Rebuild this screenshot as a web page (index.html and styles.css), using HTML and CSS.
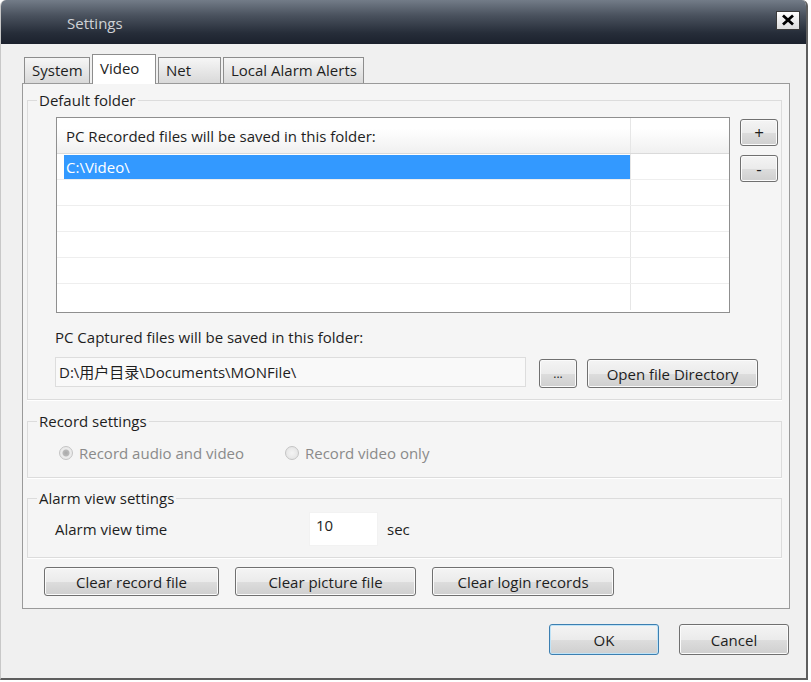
FILE: index.html
```html
<!DOCTYPE html>
<html lang="en">

<head>
    <meta charset="UTF-8">
    <meta name="viewport" content="width=device-width, initial-scale=1.0">
    <title>Settings</title>
    <link rel="stylesheet" href="styles.css">
</head>

<body>
    <div class="window">
        <div class="titlebar">
            <span class="title">Settings</span>
            <span class="close_btn">
                <svg width="14" height="12" viewBox="0 0 14 12">
                    <path d="M2 1.5 L12 10.5 M12 1.5 L2 10.5" stroke="#000" stroke-width="2.8" />
                </svg>
            </span>
        </div>

        <div class="dialog_body">
            <div class="tabs">
                <div class="tab tab_system">System</div>
                <div class="tab active">Video</div>
                <div class="tab tab_net">Net</div>
                <div class="tab tab_alarm">Local Alarm Alerts</div>
            </div>

            <div class="tab_pane">
                <fieldset class="group group_folder">
                    <legend>Default folder</legend>

                    <div class="list_row">
                        <div class="list_box">
                            <div class="list_head">
                                <div class="c1">PC Recorded files will be saved in this folder:</div>
                                <div class="c2"></div>
                            </div>
                            <div class="list_item selected">
                                <div class="c1">C:\Video\</div>
                                <div class="c2"></div>
                            </div>
                            <div class="list_item"><div class="c1"></div><div class="c2"></div></div>
                            <div class="list_item"><div class="c1"></div><div class="c2"></div></div>
                            <div class="list_item"><div class="c1"></div><div class="c2"></div></div>
                            <div class="list_item"><div class="c1"></div><div class="c2"></div></div>
                            <div class="list_item last"><div class="c1"></div><div class="c2"></div></div>
                        </div>
                        <div class="side_buttons">
                            <button class="btn sq">+</button>
                            <button class="btn sq">-</button>
                        </div>
                    </div>

                    <div class="capture_label">PC Captured files will be saved in this folder:</div>
                    <div class="capture_row">
                        <div class="path_field">D:\用户目录\Documents\MONFile\</div>
                        <button class="btn browse_btn">...</button>
                        <button class="btn open_btn">Open file Directory</button>
                    </div>
                </fieldset>

                <fieldset class="group group_record">
                    <legend>Record settings</legend>
                    <div class="radio_row">
                        <label class="radio_opt first"><input type="radio" name="rec" checked disabled> Record audio and video</label>
                        <label class="radio_opt"><input type="radio" name="rec" disabled> Record video only</label>
                    </div>
                </fieldset>

                <fieldset class="group group_alarm">
                    <legend>Alarm view settings</legend>
                    <div class="alarm_row">
                        <span class="alarm_label">Alarm view time</span>
                        <div class="time_field">10</div>
                        <span class="unit">sec</span>
                    </div>
                </fieldset>

                <div class="clear_row">
                    <button class="btn clear_record">Clear record file</button>
                    <button class="btn clear_picture">Clear picture file</button>
                    <button class="btn clear_login">Clear login records</button>
                </div>
            </div>

            <div class="dialog_buttons">
                <button class="btn ok_btn">OK</button>
                <button class="btn cancel_btn">Cancel</button>
            </div>
        </div>
    </div>
</body>

</html>
```

FILE: styles.css
```css
* {
    margin: 0;
    padding: 0;
    box-sizing: border-box;
}

body {
    background: #ffffff;
    font-family: "Open Sans", "Noto Sans CJK SC", sans-serif;
    font-size: 15px;
    color: #1e1e1e;
}

.window {
    width: 808px;
    height: 680px;
    background: #f0f0f0;
    border-right: 2px solid #5e5e5e;
    border-bottom: 2px solid #5e5e5e;
    border-left: 1px solid #c8c8c8;
    border-radius: 6px 6px 0 0;
    overflow: hidden;
}

/* title bar */
.titlebar {
    height: 44px;
    background: linear-gradient(#737c88 0%, #4a525e 35%, #262d39 75%, #1b212d 100%);
    display: flex;
    align-items: center;
    justify-content: space-between;
    padding: 0 6px 0 66px;
}

.title {
    color: #cfd2d6;
    font-size: 15px;
    margin-top: 2px;
}

.close_btn {
    width: 24px;
    height: 19px;
    margin-bottom: 4px;
    background: linear-gradient(#ffffff, #dcdcdc);
    border: 1px solid #3a3a3a;
    display: flex;
    align-items: center;
    justify-content: center;
}

/* dialog body */
.dialog_body {
    padding: 10px 16px 0 21px;
}

.tabs {
    display: flex;
    align-items: flex-end;
    gap: 2px;
    padding-left: 2px;
    height: 29px;
    position: relative;
    z-index: 1;
}

.tab {
    height: 26px;
    padding-left: 7px;
    border: 1px solid #8d8d8d;
    border-bottom: none;
    background: linear-gradient(#f6f6f6, #d9d9d9);
    display: flex;
    align-items: center;
    line-height: 1;
    white-space: nowrap;
}

.tab_system {
    width: 66px;
}

.tab.active {
    width: 64px;
    height: 30px;
    background: #ffffff;
    align-items: flex-start;
    padding-top: 6px;
    margin-bottom: -1px;
}

.tab_net {
    width: 63px;
}

.tab_alarm {
    width: 141px;
}

.tab_pane {
    border: 1px solid #9a9a9a;
    background: #f5f5f5;
    padding: 7px 7px 12px 4px;
}

/* group boxes */
.group {
    border: 1px solid #dcdcdc;
    box-shadow: 0 1px 0 #ffffff;
}

.group legend {
    margin-left: 9px;
    padding: 0 2px;
    line-height: 18px;
}

.list_row {
    display: flex;
    margin: 8px 0 0 28px;
    gap: 10px;
}

.list_box {
    width: 674px;
    height: 196px;
    border: 1px solid #8f8f8f;
    background: #ffffff;
}

.list_head {
    display: flex;
    height: 36px;
    background: linear-gradient(#ffffff 30%, #f0f0f0);
    border-bottom: 1px solid #dadada;
}

.list_head .c1 {
    line-height: 36px;
}

.c1 {
    width: 566px;
    margin-left: 7px;
    padding-left: 2px;
    white-space: nowrap;
}

.c2 {
    flex: 1;
    border-left: 1px solid #e6e6e6;
}

.list_item {
    display: flex;
    height: 26px;
    border-bottom: 1px solid #eeeeee;
}

.list_item.last {
    border-bottom: none;
}

.list_item.selected .c1 {
    background: #3399ff;
    color: #ffffff;
    line-height: 24px;
    margin-top: 1px;
    height: 24px;
}

.side_buttons {
    display: flex;
    flex-direction: column;
    gap: 9px;
    margin-top: 2px;
}

.btn {
    font-family: "Open Sans", "Noto Sans CJK SC", sans-serif;
    font-size: 15px;
    color: #1e1e1e;
    border: 1px solid #707070;
    border-radius: 3px;
    background: linear-gradient(#f4f4f4 0%, #ebebeb 50%, #dddddd 51%, #cfcfcf 100%);
    box-shadow: inset 0 0 0 1px #fbfbfb;
    white-space: nowrap;
}

.btn.sq {
    width: 38px;
    height: 27px;
    font-size: 17px;
    line-height: 1;
}

.capture_label {
    margin: 15px 0 0 27px;
    line-height: 18px;
}

.capture_row {
    display: flex;
    align-items: flex-start;
    margin: 11px 0 11px 27px;
}

.path_field {
    width: 471px;
    height: 30px;
    line-height: 28px;
    padding-left: 3px;
    border: 1px solid #dddddd;
    background: #f9f9f9;
    white-space: nowrap;
}

.browse_btn {
    width: 38px;
    height: 29px;
    margin-left: 13px;
    margin-top: 2px;
    font-size: 12px;
}

.open_btn {
    width: 171px;
    height: 29px;
    margin-left: 10px;
    margin-top: 2px;
}

.group_record {
    margin-top: 12px;
}

.radio_row {
    display: flex;
    margin: 13px 0 14px 31px;
    height: 20px;
    align-items: center;
    color: #8a8a8a;
}

.radio_opt {
    display: flex;
    align-items: center;
    gap: 6px;
    white-space: nowrap;
}

.radio_opt.first {
    width: 226px;
}

.radio_opt input {
    appearance: none;
    width: 14px;
    height: 14px;
    border-radius: 50%;
    border: 1px solid #c4c4c4;
    background: radial-gradient(circle, #f4f4f4, #e0e0e0);
}

.radio_opt input:checked {
    background: radial-gradient(circle, #a9a9a9 0, #b9b9b9 3px, #ececec 4px, #e4e4e4 100%);
}

.group_alarm {
    margin-top: 11px;
}

.alarm_row {
    display: flex;
    align-items: center;
    margin: 5px 0 11px 27px;
}

.alarm_label {
    width: 254px;
}

.time_field {
    width: 69px;
    height: 34px;
    background: #ffffff;
    padding: 3px 0 0 6px;
    line-height: 18px;
    border: 1px solid #f2f2f2;
}

.unit {
    margin-left: 9px;
}

.clear_row {
    display: flex;
    margin: 9px 0 0 17px;
    gap: 16px;
}

.clear_row .btn {
    height: 29px;
}

.clear_record {
    width: 175px;
}

.clear_picture {
    width: 181px;
}

.clear_login {
    width: 182px;
}

.dialog_buttons {
    display: flex;
    justify-content: flex-end;
    gap: 20px;
    margin-top: 15px;
    padding-right: 1px;
}

.dialog_buttons .btn {
    width: 110px;
    height: 31px;
}

.ok_btn {
    border-color: #3c7fb1;
    box-shadow: inset 0 0 0 1px #bfe3f7;
}
```
